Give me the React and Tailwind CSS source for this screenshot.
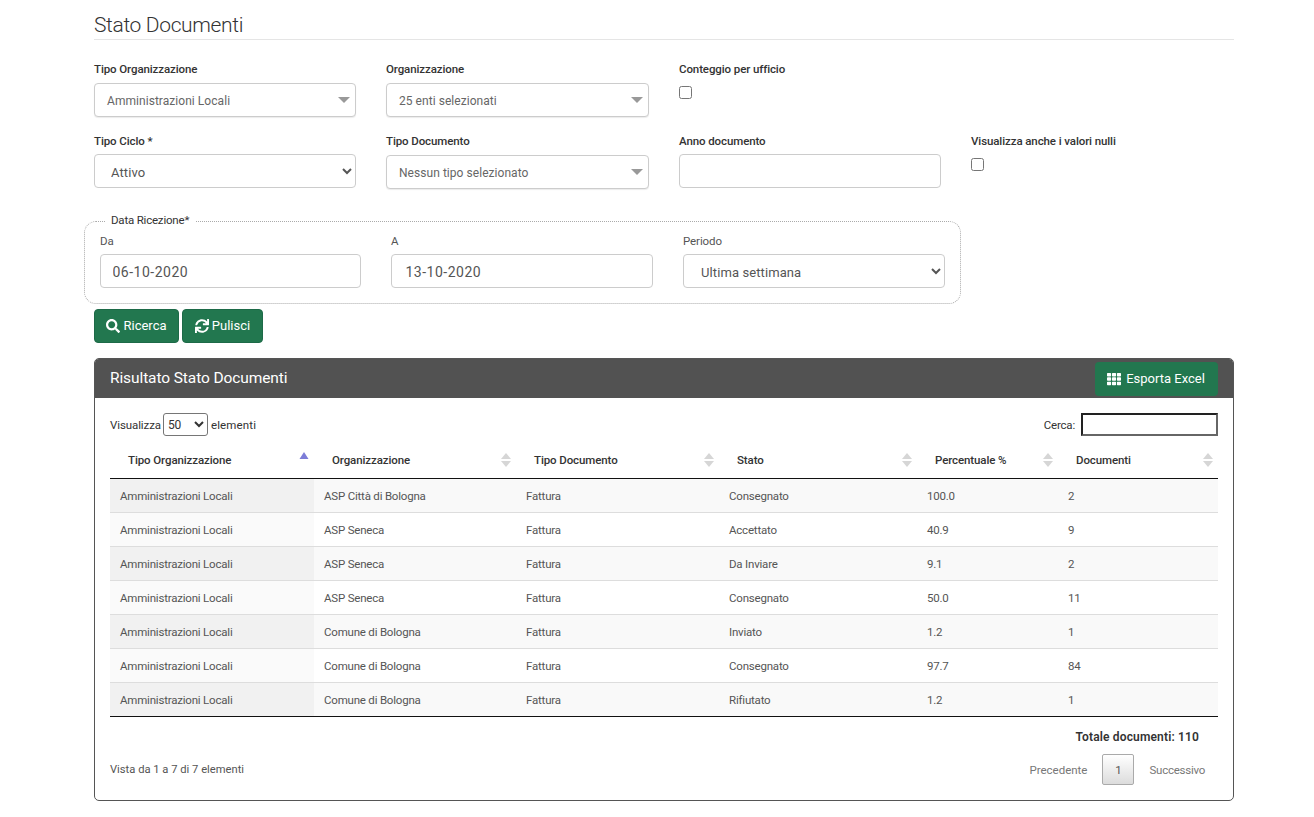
import React from "react";
import { FaSearch, FaSync, FaTh } from "react-icons/fa";

const Caret = () => (
  <svg width="12" height="6" viewBox="0 0 12 6" className="shrink-0"><polygon points="0,0 12,0 6,6" fill="#999999" /></svg>
);

const Label = ({ children }) => (
  <label className="block text-[11.5px] tracking-[-0.1px] leading-[16px] font-medium text-[#333] h-[16px]">{children}</label>
);

const FakeSelect = ({ children }) => (
  <div className="h-[34px] mt-[6px] flex items-center justify-between rounded-[4px] border border-[#ccc] bg-white pl-[12px] pr-[5px] text-[12px] tracking-[0.05px] text-[#666] shadow-[0_1px_1px_rgba(0,0,0,0.08)]">
    <span className="pt-[2px]">{children}</span>
    <Caret />
  </div>
);

const nativeCls = "block w-full h-[34px] rounded-[4px] border border-[#ccc] bg-white pl-[12px] pt-[2px] text-[13px] tracking-[0.1px] text-[#555] outline-none";
const inputCls = "block w-full h-[34px] rounded-[4px] border border-[#ccc] bg-white pr-[12px] pt-[2px] text-[14px] tracking-[0.5px] text-[#555] outline-none";

const Check = () => (
  <input type="checkbox" className="block w-[13px] h-[13px] mt-[9px] ml-0" />
);

const SortIcon = ({ active }) => (
  <svg width="12" height="16" viewBox="0 0 12 16" className="shrink-0 mt-[-1px]">
    {active ? (
      <polygon points="1.5,7 10.5,7 6,0" fill="#7d7dd8" />
    ) : (
      <>
        <polygon points="1,7 11,7 6,1" fill="#d6d6d6" />
        <polygon points="1,9 11,9 6,15" fill="#d6d6d6" />
      </>
    )}
  </svg>
);

const headers = ["Tipo Organizzazione", "Organizzazione", "Tipo Documento", "Stato", "Percentuale %", "Documenti"];
const rows = [
  ["Amministrazioni Locali", "ASP Città di Bologna", "Fattura", "Consegnato", "100.0", "2"],
  ["Amministrazioni Locali", "ASP Seneca", "Fattura", "Accettato", "40.9", "9"],
  ["Amministrazioni Locali", "ASP Seneca", "Fattura", "Da Inviare", "9.1", "2"],
  ["Amministrazioni Locali", "ASP Seneca", "Fattura", "Consegnato", "50.0", "11"],
  ["Amministrazioni Locali", "Comune di Bologna", "Fattura", "Inviato", "1.2", "1"],
  ["Amministrazioni Locali", "Comune di Bologna", "Fattura", "Consegnato", "97.7", "84"],
  ["Amministrazioni Locali", "Comune di Bologna", "Fattura", "Rifiutato", "1.2", "1"],
];

export default function App() {
  return (
    <div className="w-[1140px] ml-[94px] pb-[16px] font-['Roboto',sans-serif] text-[11.5px] tracking-[-0.2px] text-[#333]">
      <h1 className="pt-[11px] h-[40px] border-b border-[#e5e5e5] text-[21px] tracking-[-0.35px] leading-[28px] font-light text-[#333]">Stato Documenti</h1>

      <div className="grid grid-cols-[262px_263px_262px_1fr] gap-x-[30px] mt-[21px]">
        <div><Label>Tipo Organizzazione</Label><FakeSelect>Amministrazioni Locali</FakeSelect></div>
        <div><Label>Organizzazione</Label><FakeSelect>25 enti selezionati</FakeSelect></div>
        <div><Label>Conteggio per ufficio</Label><Check /></div>
        <div />
      </div>

      <div className="grid grid-cols-[262px_263px_262px_1fr] gap-x-[30px] mt-[16px]">
        <div>
          <Label>Tipo Ciclo *</Label>
          <select className={`${nativeCls} mt-[5px]`} defaultValue="Attivo"><option>Attivo</option></select>
        </div>
        <div><Label>Tipo Documento</Label><FakeSelect>Nessun tipo selezionato</FakeSelect></div>
        <div><Label>Anno documento</Label><input className={`${inputCls} pl-[12px] mt-[5px]`} /></div>
        <div><Label>Visualizza anche i valori nulli</Label><Check /></div>
      </div>

      <fieldset className="relative w-[877px] h-[83px] ml-[-10px] mt-[32px] rounded-[12px] border border-dotted border-[#aaa] px-[15px] pt-[11px]">
        <span className="absolute left-[20px] top-[-10px] bg-white px-[6px] leading-[16px] text-[#333]">Data Ricezione*</span>
        <div className="grid grid-cols-[261px_262px_262px] gap-x-[30px]">
          <div>
            <div className="leading-[16px] tracking-[-0.1px] text-[#555]">Da</div>
            <input className={`${inputCls} pl-[11.5px] mt-[5px]`} defaultValue="06-10-2020" />
          </div>
          <div>
            <div className="leading-[16px] tracking-[-0.1px] text-[#555]">A</div>
            <input className={`${inputCls} pl-[13.5px] mt-[5px]`} defaultValue="13-10-2020" />
          </div>
          <div>
            <div className="leading-[16px] tracking-[-0.1px] text-[#555]">Periodo</div>
            <select className={`${nativeCls} mt-[5px] pl-[13px]`} defaultValue="Ultima settimana"><option>Ultima settimana</option></select>
          </div>
        </div>
      </fieldset>

      <div className="flex gap-[3px] mt-[5px]">
        <button className="flex items-center justify-center gap-[3px] w-[85px] h-[34px] rounded-[4px] border border-[#1d6a48] bg-[#22774f] text-[13px] tracking-normal text-white"><FaSearch className="text-[14px]" />Ricerca</button>
        <button className="flex items-center justify-center gap-[3px] w-[81px] h-[34px] rounded-[4px] border border-[#1d6a48] bg-[#22774f] text-[13px] tracking-normal text-white"><FaSync className="text-[14px]" />Pulisci</button>
      </div>

      <div className="mt-[15px] h-[443px] rounded-[5px] border border-[#555] overflow-hidden">
        <div className="flex items-center justify-between h-[39px] bg-[#525252] pl-[15px] pr-[15px]">
          <span className="text-[15.5px] tracking-[-0.1px] text-white">Risultato Stato Documenti</span>
          <button className="flex items-center justify-center gap-[5px] w-[123px] h-[34px] mt-[1px] pr-[1px] rounded-[4px] bg-[#22774f] text-[13px] tracking-normal text-white"><FaTh className="text-[14px]" />Esporta Excel</button>
        </div>

        <div className="px-[15px] pt-[15px]">
          <div className="flex items-center justify-between h-[23px]">
            <div className="flex items-center gap-[2px] tracking-[-0.1px]">
              <span className="pt-[3px]">Visualizza</span>
              <select className="w-[45px] h-[23px] rounded-[3px] border border-[#767676] bg-white text-[12px] text-[#333]" defaultValue="50"><option>50</option></select>
              <span className="pt-[3px] pl-[1px] tracking-[0.15px]">elementi</span>
            </div>
            <div className="flex items-center gap-[6px]">
              <span className="pt-[3px]">Cerca:</span>
              <input className="w-[137px] h-[23px] border-2 border-t-[#222] border-l-[#222] border-r-[#666] border-b-[#666] bg-white outline-none" />
            </div>
          </div>

          <table className="w-[1108px] mt-[7px] table-fixed border-collapse">
            <colgroup>
              <col className="w-[204px]" /><col className="w-[202px]" /><col className="w-[203px]" /><col className="w-[198px]" /><col className="w-[141px]" /><col className="w-[160px]" />
            </colgroup>
            <thead>
              <tr className="h-[35px] border-b border-[#111]">
                {headers.map((h, i) => (
                  <th key={h} className="pl-[18px] pr-[4px] pt-[1px] text-left font-medium tracking-[-0.1px] text-[#333]">
                    <div className="flex items-center justify-between">
                      <span>{h}</span>
                      <SortIcon active={i === 0} />
                    </div>
                  </th>
                ))}
              </tr>
            </thead>
            <tbody>
              {rows.map((r, ri) => (
                <tr key={ri} className={`h-[34px] border-b ${ri === rows.length - 1 ? "border-[#111]" : "border-[#ddd]"} ${ri % 2 === 0 ? "bg-[#f9f9f9]" : "bg-white"}`}>
                  {r.map((c, ci) => (
                    <td key={ci} className={`pl-[10px] pt-[3px] text-[#555] ${ci === 0 ? (ri % 2 === 0 ? "bg-[#f1f1f1]" : "bg-[#fafafa]") : ""}`}>{c}</td>
                  ))}
                </tr>
              ))}
            </tbody>
          </table>

          <div className="mt-[12px] pr-[19px] text-right text-[12px] tracking-[0.15px] font-semibold leading-[16px] text-[#333]">Totale documenti: 110</div>

          <div className="flex items-center justify-between mt-[9px]">
            <span className="pt-[2px] text-[11.2px] tracking-normal text-[#555]">Vista da 1 a 7 di 7 elementi</span>
            <div className="flex items-center gap-[15px] pr-[13px] tracking-normal text-[#777]">
              <span className="pt-[4px]">Precedente</span>
              <span className="flex items-center justify-center pt-[3px] w-[32px] h-[31px] rounded-[2px] border border-[#aaa] bg-gradient-to-b from-white to-[#dcdcdc] text-[#555]">1</span>
              <span className="pt-[4px] tracking-[-0.25px]">Successivo</span>
            </div>
          </div>
        </div>
      </div>
    </div>
  );
}
